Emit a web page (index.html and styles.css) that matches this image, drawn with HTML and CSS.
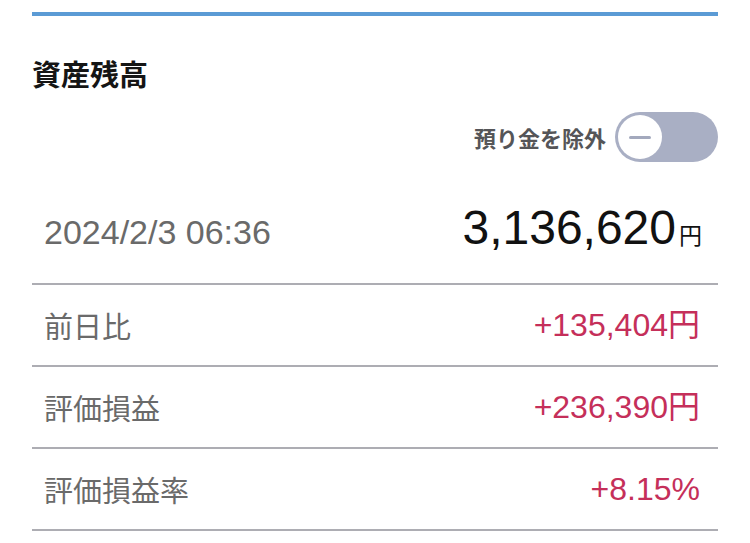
FILE: index.html
```html
<!DOCTYPE html>
<html lang="ja">
<head>
<meta charset="utf-8">
<link rel="stylesheet" href="styles.css">
</head>
<body>
<div class="page">
  <div class="topbar"></div>
  <h1 class="title">資産残高</h1>
  <div class="toggle-row">
    <span class="toggle-label">預り金を除外</span>
    <span class="toggle"><span class="knob"><span class="dash"></span></span></span>
  </div>
  <div class="row row-main">
    <span class="date">2024/2/3 06:36</span>
    <span class="total">3,136,620<span class="yen">円</span></span>
  </div>
  <div class="row">
    <span class="label">前日比</span>
    <span class="value">+135,404円</span>
  </div>
  <div class="row">
    <span class="label">評価損益</span>
    <span class="value">+236,390円</span>
  </div>
  <div class="row">
    <span class="label">評価損益率</span>
    <span class="value">+8.15%</span>
  </div>
</div>
</body>
</html>
```
FILE: styles.css
```css
html, body {
  margin: 0;
  padding: 0;
  background: #ffffff;
}
body {
  font-family: "Liberation Sans", "Noto Sans CJK JP", sans-serif;
}
.page {
  padding: 12px 32px 0 32px;
}
.topbar {
  height: 4px;
  background: #5b9bd5;
}
.title {
  margin: 37px 0 0 0;
  font-family: "Noto Sans CJK JP", sans-serif;
  font-size: 29px;
  line-height: 40px;
  font-weight: 700;
  color: #151515;
}
.toggle-row {
  margin-top: 19px;
  display: flex;
  justify-content: flex-end;
  align-items: center;
  gap: 9px;
  height: 50px;
}
.toggle-label {
  font-family: "Noto Sans CJK JP", sans-serif;
  font-size: 22px;
  font-weight: 700;
  color: #555558;
  line-height: 1;
}
.toggle {
  width: 103px;
  height: 50px;
  border-radius: 25px;
  background: #a9afc4;
  display: flex;
  align-items: center;
  padding-left: 3px;
  box-sizing: border-box;
}
.knob {
  width: 44px;
  height: 44px;
  border-radius: 50%;
  background: #ffffff;
  display: flex;
  align-items: center;
  justify-content: center;
}
.dash {
  width: 22px;
  height: 3px;
  border-radius: 2px;
  background: #a3a9bd;
}
.row {
  display: flex;
  justify-content: space-between;
  align-items: center;
  height: 80px;
  padding: 0 18px 0 12px;
  border-bottom: 2px solid #adadb3;
}
.row-main {
  height: auto;
  align-items: baseline;
  padding-top: 38px;
  padding-bottom: 23px;
}
.date {
  font-size: 34px;
  color: #6a6a6a;
  line-height: 56px;
}
.total {
  font-size: 48px;
  line-height: 56px;
  color: #111111;
  margin-right: -2px;
}
.yen {
  font-family: "Noto Sans CJK JP", sans-serif;
  font-size: 23px;
  line-height: 1;
  margin-left: 3px;
}
.label {
  font-family: "Noto Sans CJK JP", sans-serif;
  font-size: 29px;
  color: #6a6a6a;
  line-height: 1;
}
.value {
  font-size: 32px;
  color: #c52f5a;
  line-height: 1;
}
```
